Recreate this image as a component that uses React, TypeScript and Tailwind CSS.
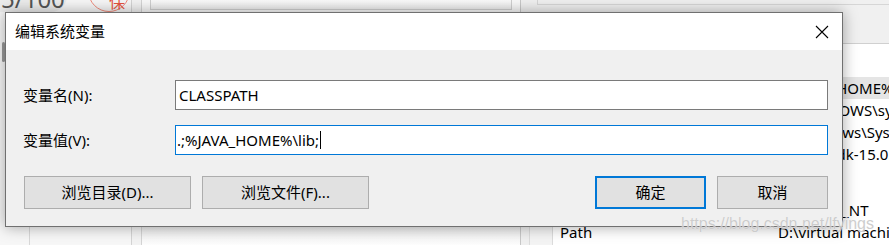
import React from "react";

const FONT = { fontFamily: '"Noto Sans", "Noto Sans CJK SC", sans-serif' };

// filas de la lista de variables del sistema (detrás del diálogo)
const filas = [
  { nombre: "CLASSPATH", valor: ".;%JAVA_HOME%\\lib;", sel: true },
  { nombre: "ComSpec", valor: "C:\\WINDOWS\\system32\\cmd.exe" },
  { nombre: "DriverData", valor: "C:\\Windows\\System32\\Drivers\\DriverData" },
  { nombre: "JAVA_HOME", valor: "D:\\Java\\jdk-15.0.1" },
  { nombre: "NUMBER_OF_PROCESSORS", valor: "8" },
  { nombre: "OS", valor: "Windows_NT" },
  { nombre: "Path", valor: "D:\\virtual machine\\bin\\" },
];

const Fondo = () => (
  <div className="flex h-full w-full">
    {/* columna izquierda */}
    <div className="flex w-[131px] shrink-0 flex-col bg-[#f7f7f7]">
      <div className="flex h-[12px] items-end overflow-hidden">
        <div className="-mt-[20px] flex h-[32px] w-[67px] shrink-0 items-end rounded-br-[16px] bg-[#ececec] pb-[1px] pl-[1px] text-[24px] leading-none text-[#555]">
          5/100
        </div>
        <div className="-mt-[30px] ml-[21px] flex h-[42px] w-[42px] shrink-0 items-end justify-end rounded-full border border-[#f08a7a] pr-[4px] pb-[1px] text-[16px] leading-none text-[#e8533f]">
          保
        </div>
      </div>
      <div className="flex flex-1">
        <div className="mt-[30px] ml-[2px] h-[20px] w-[3px] rounded bg-[#9a9a9a]" />
      </div>
      <div className="ml-[29px] h-[18px] w-[1px] bg-[#d8d8d8]" />
    </div>
    <div className="w-[11px] shrink-0 border-x border-[#d4d4d4] bg-[#f3f3f3]" />
    {/* panel central */}
    <div className="flex w-[378px] shrink-0 flex-col bg-[#f9f9f9]">
      <div className="mx-[8px] h-[10px] border-x border-b border-[#cfcfcf] bg-gradient-to-b from-[#fafafa] to-[#ededed]" />
      <div className="flex-1" />
      <div className="h-[18px] bg-gradient-to-b from-[#ececec] to-[#fdfdfd]" />
    </div>
    {/* ventana derecha */}
    <div className="flex min-w-0 flex-1 flex-col overflow-hidden border-l border-[#c8c8c8] bg-[#f0f0f0]">
      <div className="ml-[16px] h-[5px] border-b border-l border-[#d6d6d6]" />
      <div className="h-[38px]" />
      <div className="flex min-w-0 flex-1 pl-[8px]">
        <div className="w-[24px] shrink-0 border-x border-[#dcdcdc] bg-[#f4f4f4]" />
        <div className="flex min-w-0 flex-1 flex-col overflow-hidden border-t border-[#d0d0d0] bg-white pt-[33px] text-[15px] text-black">
          {filas.map((f) => (
            <div
              key={f.nombre}
              className={`flex h-[22px] shrink-0 items-center whitespace-nowrap ${
                f.sel ? "bg-[#e5e5e5]" : ""
              } ${f.nombre === "OS" ? "mt-[12px]" : ""}`}
            >
              <span className="w-[225px] shrink-0 pl-[7px]">{f.nombre}</span>
              <span className="shrink-0">{f.valor}</span>
            </div>
          ))}
        </div>
      </div>
    </div>
  </div>
);

const Boton = ({ texto, principal = false, ancho }: { texto: string; principal?: boolean; ancho: string }) => (
  <button
    className={`flex h-[33px] items-center justify-center bg-[#e1e1e1] text-[15px] text-black ${ancho} ${
      principal ? "border-2 border-[#0078d7]" : "border border-[#adadad]"
    }`}
  >
    {texto}
  </button>
);

const Dialogo = () => (
  <div className="absolute top-[12px] left-[5px] flex h-[215px] w-[838px] flex-col border border-[#707070] bg-[#f0f0f0] shadow-[0_0_14px_rgba(0,0,0,0.35)]">
    <div className="flex h-[37px] items-center justify-between bg-white pr-[13px] pl-[9px]">
      <span className="text-[15px] text-black">编辑系统变量</span>
      <svg width="14" height="14" viewBox="0 0 14 14">
        <path d="M1 1 L13 13 M13 1 L1 13" stroke="#000" strokeWidth="1.1" fill="none" />
      </svg>
    </div>
    <div className="flex flex-1 flex-col pt-[30px] pr-[14px] pl-[17px]">
      <div className="flex h-[30px] items-center">
        <span className="w-[152px] text-[15px] text-black">变量名(N):</span>
        <div className="flex h-[30px] flex-1 items-center border border-[#7a7a7a] bg-white pl-[3px] text-[15px] text-black">
          CLASSPATH
        </div>
      </div>
      <div className="mt-[15px] flex h-[30px] items-center">
        <span className="w-[152px] text-[15px] text-black">变量值(V):</span>
        <div className="flex h-[30px] flex-1 items-center border border-[#0078d7] bg-white pl-[1px] text-[15px] text-black">
          .;%JAVA_HOME%\lib;
          <span className="ml-[1px] h-[18px] w-[1px] bg-black" />
        </div>
      </div>
      <div className="mt-[21px] flex items-center">
        <div className="ml-[1px] flex gap-[11px]">
          <Boton texto="浏览目录(D)..." ancho="w-[167px]" />
          <Boton texto="浏览文件(F)..." ancho="w-[167px]" />
        </div>
        <div className="ml-auto flex gap-[11px]">
          <Boton texto="确定" principal ancho="w-[111px]" />
          <Boton texto="取消" ancho="w-[111px]" />
        </div>
      </div>
    </div>
  </div>
);

export default function App() {
  return (
    <div className="relative h-[245px] w-[889px] overflow-hidden bg-[#f0f0f0]" style={FONT}>
      <Fondo />
      <Dialogo />
      {/* marca de agua */}
      <div
        className="absolute top-[212px] left-[681px] text-[16px] whitespace-nowrap text-[#c9c9c9] opacity-90 [text-shadow:0_0_1px_#fff]"
        style={{ fontFamily: '"Liberation Sans", sans-serif' }}
      >
        https://blog.csdn.net/lfyings
      </div>
    </div>
  );
}
